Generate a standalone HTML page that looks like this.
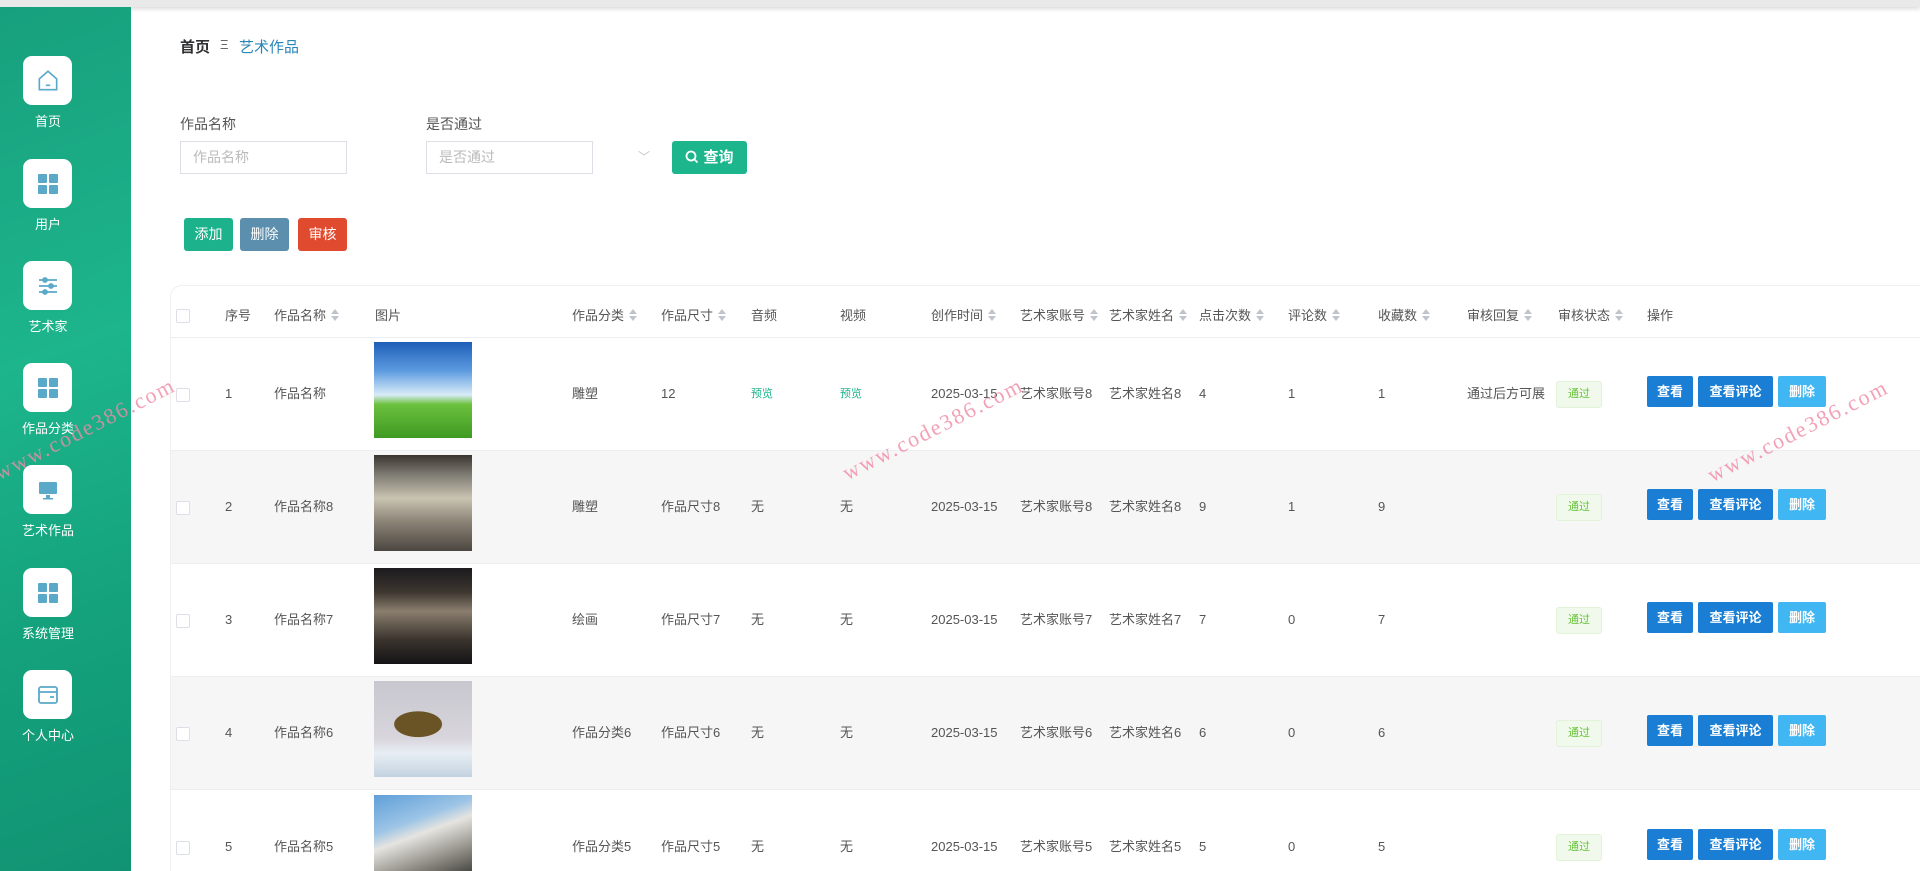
<!DOCTYPE html>
<html><head><meta charset="utf-8">
<style>
*{margin:0;padding:0;box-sizing:border-box}
html,body{width:1920px;height:871px;overflow:hidden}
body{background:#fff;font-family:"Liberation Sans","Noto Sans CJK SC",sans-serif;font-size:14px;color:#555;position:relative}
.topbar{position:absolute;left:0;top:0;width:1920px;height:7px;background:#e9e9e9;box-shadow:0 2px 4px rgba(0,0,0,.15)}
.side{position:absolute;left:0;top:7px;width:131px;height:864px;background:linear-gradient(160deg,#17a07d 0%,#1db58c 40%,#14a27c 70%,#119373 100%)}
.item{position:absolute;left:23px;width:50px;text-align:center}
.ic{width:49px;height:49px;background:#fff;border-radius:9px;display:flex;align-items:center;justify-content:center}
.lb{position:absolute;top:55px;left:-20px;width:90px;text-align:center;color:#fff;font-size:13px}
.a{position:absolute;white-space:nowrap}
.inp{position:absolute;height:33px;border:1px solid #dcdfe6;color:#bbb;font-size:14px;padding-left:12px;line-height:31px}
.btn{position:absolute;color:#fff;font-size:14px;text-align:center;border-radius:3px}
.card{position:absolute;left:170px;top:285px;width:1760px;height:586px;border-radius:12px 0 0 0;border-top:1px solid #f0f0f0;border-left:1px solid #f0f0f0}
.row{position:absolute;left:171px;width:1749px;height:113px;border-bottom:1px solid #eceef2}
.hd{color:#444;font-size:13px}
.c{position:absolute;font-size:13px;color:#555;white-space:nowrap;line-height:20px;height:20px}
.cb{position:absolute;left:176px;width:14px;height:14px;border:1px solid #dcdfe6;border-radius:2px;background:#fff}
.s{display:inline-block;width:8px;height:12px;margin-left:5px;vertical-align:-1px;position:relative}
.s:before{content:"";position:absolute;left:0;top:0;border:4px solid transparent;border-bottom:5px solid #c0c4cc;border-top:0}
.s:after{content:"";position:absolute;left:0;top:7px;border:4px solid transparent;border-top:5px solid #c0c4cc;border-bottom:0}
.img{position:absolute;left:374px;width:98px;height:96px}
.tag{position:absolute;left:1556px;width:46px;height:27px;border:1px solid #e1f3d8;background:#f0f9eb;color:#67c23a;font-size:11px;text-align:center;line-height:25px;border-radius:3px}
.ob{position:absolute;height:31px;line-height:31px;color:#fff;font-size:13px;text-align:center;border-radius:2px;font-weight:bold}
.wm{position:absolute;color:#f08aa6;font-family:"Liberation Serif",serif;font-size:22px;letter-spacing:2px;transform:rotate(-27deg);transform-origin:left bottom;opacity:.8}
</style></head><body>
<div class="topbar"></div>
<div class="side">
 <div class="item" style="top:49px"><div class="ic"><svg width="26" height="26" viewBox="0 0 24 24" fill="none" stroke="#5aa9c8" stroke-width="1.5"><path d="M4 10 L12 3 L20 10 V20 H4 Z"/><path d="M10 16h4"/></svg></div><div class="lb">首页</div></div>
 <div class="item" style="top:152px"><div class="ic"><svg width="22" height="22" viewBox="0 0 22 22" fill="#5aa9c8"><rect x="1" y="1" width="9" height="9" rx="1"/><rect x="12" y="1" width="9" height="9" rx="1"/><rect x="1" y="12" width="9" height="9" rx="1"/><rect x="12" y="12" width="9" height="9" rx="1"/></svg></div><div class="lb">用户</div></div>
 <div class="item" style="top:254px"><div class="ic"><svg width="24" height="24" viewBox="0 0 24 24" stroke="#5aa9c8" stroke-width="1.8" fill="#5aa9c8"><path d="M3 6h18M3 12h18M3 18h18"/><circle cx="9" cy="6" r="2"/><circle cx="15" cy="12" r="2"/><circle cx="9" cy="18" r="2"/></svg></div><div class="lb">艺术家</div></div>
 <div class="item" style="top:356px"><div class="ic"><svg width="22" height="22" viewBox="0 0 22 22" fill="#5aa9c8"><rect x="1" y="1" width="9" height="9" rx="1"/><rect x="12" y="1" width="9" height="9" rx="1"/><rect x="1" y="12" width="9" height="9" rx="1"/><rect x="12" y="12" width="9" height="9" rx="1"/></svg></div><div class="lb">作品分类</div></div>
 <div class="item" style="top:458px"><div class="ic"><svg width="24" height="24" viewBox="0 0 24 24" fill="#5aa9c8"><rect x="3" y="4" width="18" height="12" rx="1"/><rect x="10" y="17" width="4" height="3"/><rect x="7" y="20" width="10" height="1.5"/></svg></div><div class="lb">艺术作品</div></div>
 <div class="item" style="top:561px"><div class="ic"><svg width="22" height="22" viewBox="0 0 22 22" fill="#5aa9c8"><rect x="1" y="1" width="9" height="9" rx="1"/><rect x="12" y="1" width="9" height="9" rx="1"/><rect x="1" y="12" width="9" height="9" rx="1"/><rect x="12" y="12" width="9" height="9" rx="1"/></svg></div><div class="lb">系统管理</div></div>
 <div class="item" style="top:663px"><div class="ic"><svg width="24" height="24" viewBox="0 0 24 24" fill="none" stroke="#5aa9c8" stroke-width="1.8"><rect x="3" y="4" width="18" height="16" rx="2"/><path d="M3 9h18M14 14h4"/></svg></div><div class="lb">个人中心</div></div>
</div>

<div class="a" style="left:180px;top:36px;font-size:15px;color:#303133;font-weight:bold">首页</div>
<div class="a" style="left:220px;top:37px;font-size:13px;color:#666">Ξ</div>
<div class="a" style="left:239px;top:36px;font-size:15px;color:#2a85b8">艺术作品</div>

<div class="a" style="left:180px;top:114px;font-size:14px;color:#555">作品名称</div>
<div class="inp" style="left:180px;top:141px;width:167px">作品名称</div>
<div class="a" style="left:426px;top:114px;font-size:14px;color:#555">是否通过</div>
<div class="inp" style="left:426px;top:141px;width:167px">是否通过</div>
<div class="a" style="left:638px;top:148px;color:#c0c4cc;font-size:12px">﹀</div>
<div class="btn" style="left:672px;top:141px;width:75px;height:33px;line-height:33px;background:#1cb58c;font-weight:bold;font-size:15px"><svg width="14" height="14" viewBox="0 0 14 14" fill="none" stroke="#fff" stroke-width="1.8" style="vertical-align:-2px;margin-right:4px"><circle cx="6" cy="6" r="4.5"/><path d="M9.5 9.5l3 3"/></svg>查询</div>

<div class="btn" style="left:184px;top:218px;width:49px;height:33px;line-height:33px;background:#1cb28c">添加</div>
<div class="btn" style="left:240px;top:218px;width:49px;height:33px;line-height:33px;background:#5b8fad">删除</div>
<div class="btn" style="left:298px;top:218px;width:49px;height:33px;line-height:33px;background:#e04a2e">审核</div>

<div class="card"></div>
<div class="cb" style="top:309px"></div>
<div class="c hd" style="left:225px;top:306px">序号</div>
<div class="c hd" style="left:274px;top:306px">作品名称<i class="s"></i></div>
<div class="c hd" style="left:375px;top:306px">图片</div>
<div class="c hd" style="left:572px;top:306px">作品分类<i class="s"></i></div>
<div class="c hd" style="left:661px;top:306px">作品尺寸<i class="s"></i></div>
<div class="c hd" style="left:751px;top:306px">音频</div>
<div class="c hd" style="left:840px;top:306px">视频</div>
<div class="c hd" style="left:931px;top:306px">创作时间<i class="s"></i></div>
<div class="c hd" style="left:1020px;top:306px">艺术家账号<i class="s"></i></div>
<div class="c hd" style="left:1109px;top:306px">艺术家姓名<i class="s"></i></div>
<div class="c hd" style="left:1199px;top:306px">点击次数<i class="s"></i></div>
<div class="c hd" style="left:1288px;top:306px">评论数<i class="s"></i></div>
<div class="c hd" style="left:1378px;top:306px">收藏数<i class="s"></i></div>
<div class="c hd" style="left:1467px;top:306px">审核回复<i class="s"></i></div>
<div class="c hd" style="left:1558px;top:306px">审核状态<i class="s"></i></div>
<div class="c hd" style="left:1647px;top:306px">操作</div>

<div class="row" style="top:225px;height:113px;background:transparent"></div>
<div class="row" style="top:338px;background:#fff"></div>
<div class="row" style="top:451px;background:#f6f6f6"></div>
<div class="row" style="top:564px;background:#fff"></div>
<div class="row" style="top:677px;background:#f6f6f6"></div>
<div class="row" style="top:791px;height:80px;background:#fff;border-bottom:none"></div>

<div class="img" style="top:342px;background:linear-gradient(180deg,#1d5fb8 0%,#5d9be0 30%,#d9ecf8 55%,#6cc13d 65%,#3e9a22 100%)"></div>
<div class="img" style="top:455px;background:linear-gradient(180deg,#3a3530 0%,#7d7a72 20%,#c9c3b1 45%,#8a8275 70%,#4b4640 100%)"></div>
<div class="img" style="top:568px;background:linear-gradient(180deg,#1b1a1d 0%,#3d3630 25%,#8a7e6e 45%,#3a332d 75%,#141316 100%)"></div>
<div class="img" style="top:681px;background:radial-gradient(ellipse 40% 22% at 45% 45%,#6a5425 60%,transparent 62%),linear-gradient(180deg,#c8c6ce 0%,#d8d6dc 60%,#e8eef4 75%,#c4d2e0 100%)"></div>
<div class="img" style="top:795px;height:76px;background:linear-gradient(160deg,#5f9fd8 0%,#9cc4e6 35%,#e6e4e0 50%,#8a8880 80%,#4a4a46 100%)"></div>

<div class="cb" style="top:388px"></div><div class="c" style="left:225px;top:384px">1</div><div class="c" style="left:274px;top:384px">作品名称</div><div class="c" style="left:572px;top:384px">雕塑</div><div class="c" style="left:661px;top:384px">12</div><div class="c" style="left:751px;top:384px;color:#1cb58c;font-size:11px">预览</div><div class="c" style="left:840px;top:384px;color:#1cb58c;font-size:11px">预览</div><div class="c" style="left:931px;top:384px">2025-03-15</div><div class="c" style="left:1020px;top:384px">艺术家账号8</div><div class="c" style="left:1109px;top:384px">艺术家姓名8</div><div class="c" style="left:1199px;top:384px">4</div><div class="c" style="left:1288px;top:384px">1</div><div class="c" style="left:1378px;top:384px">1</div><div class="c" style="left:1467px;top:384px">通过后方可展</div><div class="tag" style="top:381px">通过</div>
<div class="ob" style="left:1647px;top:376px;width:46px;background:#1a7fd4">查看</div><div class="ob" style="left:1698px;top:376px;width:75px;background:#1a7fd4">查看评论</div><div class="ob" style="left:1778px;top:376px;width:48px;background:#40b6f2">删除</div>

<div class="cb" style="top:501px"></div><div class="c" style="left:225px;top:497px">2</div><div class="c" style="left:274px;top:497px">作品名称8</div><div class="c" style="left:572px;top:497px">雕塑</div><div class="c" style="left:661px;top:497px">作品尺寸8</div><div class="c" style="left:751px;top:497px">无</div><div class="c" style="left:840px;top:497px">无</div><div class="c" style="left:931px;top:497px">2025-03-15</div><div class="c" style="left:1020px;top:497px">艺术家账号8</div><div class="c" style="left:1109px;top:497px">艺术家姓名8</div><div class="c" style="left:1199px;top:497px">9</div><div class="c" style="left:1288px;top:497px">1</div><div class="c" style="left:1378px;top:497px">9</div><div class="tag" style="top:494px">通过</div>
<div class="ob" style="left:1647px;top:489px;width:46px;background:#1a7fd4">查看</div><div class="ob" style="left:1698px;top:489px;width:75px;background:#1a7fd4">查看评论</div><div class="ob" style="left:1778px;top:489px;width:48px;background:#40b6f2">删除</div>

<div class="cb" style="top:614px"></div><div class="c" style="left:225px;top:610px">3</div><div class="c" style="left:274px;top:610px">作品名称7</div><div class="c" style="left:572px;top:610px">绘画</div><div class="c" style="left:661px;top:610px">作品尺寸7</div><div class="c" style="left:751px;top:610px">无</div><div class="c" style="left:840px;top:610px">无</div><div class="c" style="left:931px;top:610px">2025-03-15</div><div class="c" style="left:1020px;top:610px">艺术家账号7</div><div class="c" style="left:1109px;top:610px">艺术家姓名7</div><div class="c" style="left:1199px;top:610px">7</div><div class="c" style="left:1288px;top:610px">0</div><div class="c" style="left:1378px;top:610px">7</div><div class="tag" style="top:607px">通过</div>
<div class="ob" style="left:1647px;top:602px;width:46px;background:#1a7fd4">查看</div><div class="ob" style="left:1698px;top:602px;width:75px;background:#1a7fd4">查看评论</div><div class="ob" style="left:1778px;top:602px;width:48px;background:#40b6f2">删除</div>

<div class="cb" style="top:727px"></div><div class="c" style="left:225px;top:723px">4</div><div class="c" style="left:274px;top:723px">作品名称6</div><div class="c" style="left:572px;top:723px">作品分类6</div><div class="c" style="left:661px;top:723px">作品尺寸6</div><div class="c" style="left:751px;top:723px">无</div><div class="c" style="left:840px;top:723px">无</div><div class="c" style="left:931px;top:723px">2025-03-15</div><div class="c" style="left:1020px;top:723px">艺术家账号6</div><div class="c" style="left:1109px;top:723px">艺术家姓名6</div><div class="c" style="left:1199px;top:723px">6</div><div class="c" style="left:1288px;top:723px">0</div><div class="c" style="left:1378px;top:723px">6</div><div class="tag" style="top:720px">通过</div>
<div class="ob" style="left:1647px;top:715px;width:46px;background:#1a7fd4">查看</div><div class="ob" style="left:1698px;top:715px;width:75px;background:#1a7fd4">查看评论</div><div class="ob" style="left:1778px;top:715px;width:48px;background:#40b6f2">删除</div>

<div class="cb" style="top:841px"></div><div class="c" style="left:225px;top:837px">5</div><div class="c" style="left:274px;top:837px">作品名称5</div><div class="c" style="left:572px;top:837px">作品分类5</div><div class="c" style="left:661px;top:837px">作品尺寸5</div><div class="c" style="left:751px;top:837px">无</div><div class="c" style="left:840px;top:837px">无</div><div class="c" style="left:931px;top:837px">2025-03-15</div><div class="c" style="left:1020px;top:837px">艺术家账号5</div><div class="c" style="left:1109px;top:837px">艺术家姓名5</div><div class="c" style="left:1199px;top:837px">5</div><div class="c" style="left:1288px;top:837px">0</div><div class="c" style="left:1378px;top:837px">5</div><div class="tag" style="top:834px">通过</div>
<div class="ob" style="left:1647px;top:829px;width:46px;background:#1a7fd4">查看</div><div class="ob" style="left:1698px;top:829px;width:75px;background:#1a7fd4">查看评论</div><div class="ob" style="left:1778px;top:829px;width:48px;background:#40b6f2">删除</div>

<div class="wm" style="left:2px;top:460px">www.code386.com</div>
<div class="wm" style="left:850px;top:460px">www.code386.com</div>
<div class="wm" style="left:1715px;top:462px">www.code386.com</div>
</body></html>
